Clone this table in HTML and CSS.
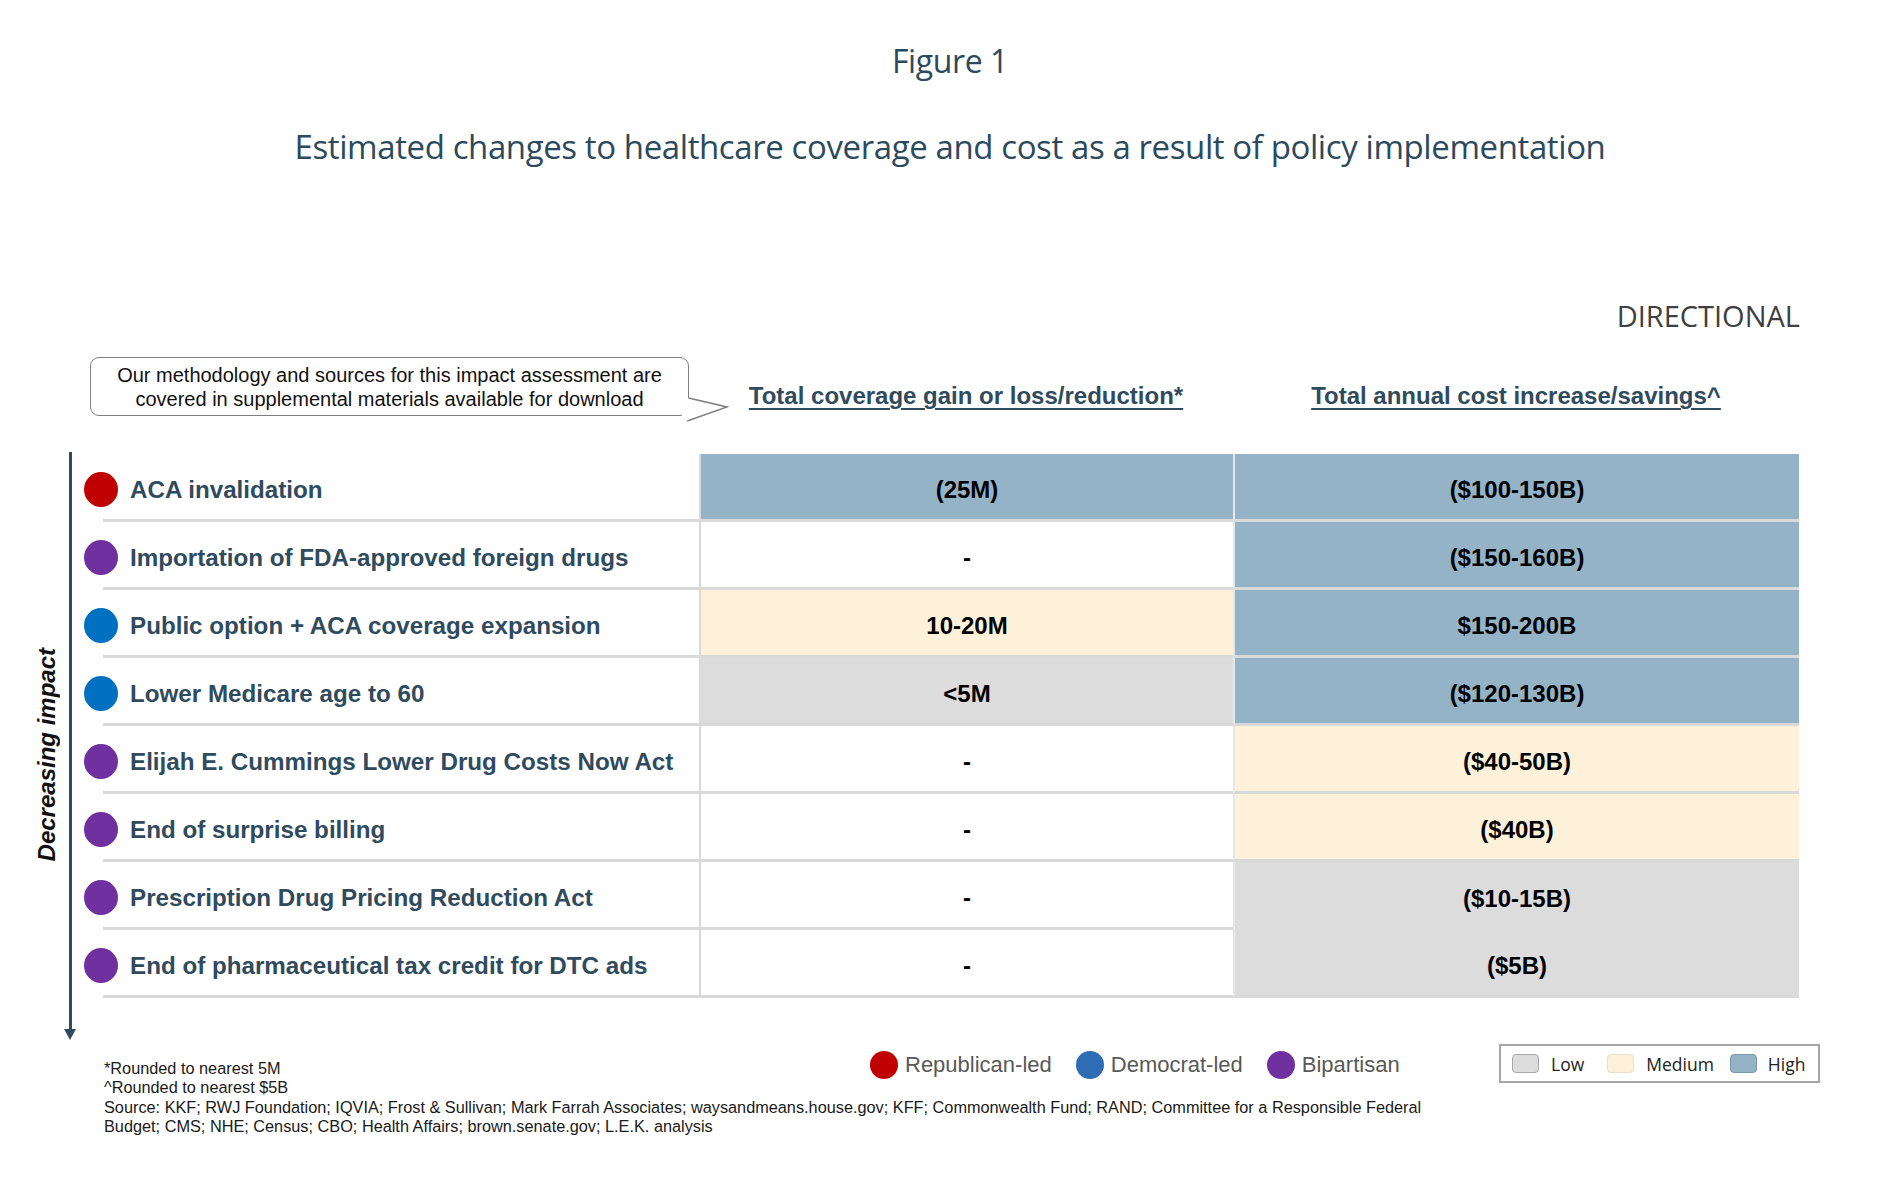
FILE: index.html
```html
<!DOCTYPE html>
<html lang="en">
<head>
<meta charset="utf-8">
<title>Figure 1</title>
<link rel="stylesheet" href="styles.css">
</head>
<body>
<div class="page">
  <h1 class="fig">Figure 1</h1>
  <h2 class="subtitle">Estimated changes to healthcare coverage and cost as a result of policy implementation</h2>
  <div class="directional">DIRECTIONAL</div>

  <div class="head-row">
    <div class="callout">
      <p>Our methodology and sources for this impact assessment are<br>covered in supplemental materials available for download</p>
      <svg class="callout-tail" width="50" height="40" viewBox="0 0 50 40">
        <polygon points="2,9 9,9 47,18 7.5,32 2,32" fill="#fff"/>
        <polyline points="8.6,9 47,18 7.2,32" fill="none" stroke="#7f7f7f" stroke-width="1.5"/>
      </svg>
    </div>
    <div class="col-head">Total coverage gain or loss/reduction*</div>
    <div class="col-head">Total annual cost increase/savings^</div>
  </div>

  <div class="matrix">
    <div class="axis-label">Decreasing impact</div>
    <div class="axis"><div class="axis-line"></div><div class="axis-head"></div></div>
    <div class="grid">
      <div class="cell lbl"><span class="dot red"></span>ACA invalidation</div>
      <div class="cell c2 hi">(25M)</div>
      <div class="cell c3 hi">($100-150B)</div>

      <div class="cell lbl"><span class="dot purple"></span>Importation of FDA-approved foreign drugs</div>
      <div class="cell c2">-</div>
      <div class="cell c3 hi">($150-160B)</div>

      <div class="cell lbl"><span class="dot blue"></span>Public option + ACA coverage expansion</div>
      <div class="cell c2 md">10-20M</div>
      <div class="cell c3 hi">$150-200B</div>

      <div class="cell lbl"><span class="dot blue"></span>Lower Medicare age to 60</div>
      <div class="cell c2 lo">&lt;5M</div>
      <div class="cell c3 hi">($120-130B)</div>

      <div class="cell lbl"><span class="dot purple"></span>Elijah E. Cummings Lower Drug Costs Now Act</div>
      <div class="cell c2">-</div>
      <div class="cell c3 md">($40-50B)</div>

      <div class="cell lbl"><span class="dot purple"></span>End of surprise billing</div>
      <div class="cell c2">-</div>
      <div class="cell c3 md">($40B)</div>

      <div class="cell lbl"><span class="dot purple"></span>Prescription Drug Pricing Reduction Act</div>
      <div class="cell c2">-</div>
      <div class="cell c3 lo nb">($10-15B)</div>

      <div class="cell lbl"><span class="dot purple"></span>End of pharmaceutical tax credit for DTC ads</div>
      <div class="cell c2">-</div>
      <div class="cell c3 lo">($5B)</div>
    </div>
  </div>

  <div class="bottom">
    <div class="notes">*Rounded to nearest 5M<br>^Rounded to nearest $5B</div>
    <div class="legend">
      <div class="lg-item"><span class="lg-dot red"></span>Republican-led</div>
      <div class="lg-item"><span class="lg-dot dem"></span>Democrat-led</div>
      <div class="lg-item"><span class="lg-dot purple"></span>Bipartisan</div>
    </div>
    <div class="scale">
      <span class="sw sw-lo"></span><span class="t">Low</span>
      <span class="sw sw-md"></span><span class="t t-md">Medium</span>
      <span class="sw sw-hi"></span><span class="t last">High</span>
    </div>
    <div class="source">Source: KKF; RWJ Foundation; IQVIA; Frost &amp; Sullivan; Mark Farrah Associates; waysandmeans.house.gov; KFF; Commonwealth Fund; RAND; Committee for a Responsible Federal<br>Budget; CMS; NHE; Census; CBO; Health Affairs; brown.senate.gov; L.E.K. analysis</div>
  </div>
</div>
</body>
</html>
```
FILE: styles.css
```css
body {
  margin: 0;
  background: #ffffff;
}

.page {
  width: 1900px;
}

.fig {
  margin: 41px 0 0;
  font: 400 32px/40px "Open Sans", sans-serif;
  letter-spacing: -0.4px;
  color: #2d4a5c;
  text-align: center;
}

.subtitle {
  margin: 46px 0 0;
  font: 400 33px/40px "Open Sans", sans-serif;
  letter-spacing: -0.4px;
  color: #2d4a5c;
  text-align: center;
}

.directional {
  margin-top: 131px;
  padding-right: 100px;
  text-align: right;
  font: 400 29px/36px "Open Sans", sans-serif;
  color: #404040;
}

.head-row {
  margin-top: 23px;
  display: grid;
  grid-template-columns: 699px 534px 566px;
  height: 59px;
}

.callout {
  position: relative;
  margin-left: 90px;
  width: 599px;
  height: 59px;
  box-sizing: border-box;
  border: 1.5px solid #7f7f7f;
  border-radius: 9px;
  display: flex;
  align-items: center;
  justify-content: center;
  font: 400 20px/24px "Liberation Sans", Arial, sans-serif;
  color: #111;
  text-align: center;
}

.callout p {
  margin: 0;
}

.callout-tail {
  position: absolute;
  left: 588.5px;
  top: 30.5px;
  overflow: visible;
}

.col-head {
  margin-top: 25px;
  text-align: center;
  font: 700 24px/28px "Liberation Sans", Arial, sans-serif;
  color: #2f4b5d;
  text-decoration: underline;
  text-decoration-thickness: 2px;
  text-underline-offset: 4px;
}

.matrix {
  margin-top: 36px;
  display: flex;
}

.axis-label {
  margin-left: 33px;
  margin-top: 18px;
  width: 28px;
  align-self: center;
  writing-mode: vertical-rl;
  transform: rotate(180deg);
  font: italic 700 24px/28px "Liberation Sans", Arial, sans-serif;
  color: #111;
  white-space: nowrap;
}

.axis {
  margin-left: 3px;
  width: 12px;
  display: flex;
  flex-direction: column;
  align-items: center;
}

.axis-line {
  flex: 1;
  width: 3px;
  background: #2f4b5d;
}

.axis-head {
  width: 0;
  height: 0;
  border-left: 6px solid transparent;
  border-right: 6px solid transparent;
  border-top: 11px solid #2f4b5d;
}

.grid {
  margin: 2px 0 42px 27px;
  display: grid;
  grid-template-columns: 596px 534px 566px;
  grid-auto-rows: 68px;
}

.cell {
  box-sizing: border-box;
  padding-top: 6px;
  border-bottom: 3px solid #d9d9d9;
  display: flex;
  align-items: center;
  justify-content: center;
  font: 700 24px "Liberation Sans", Arial, sans-serif;
  color: #000;
}

.lbl {
  justify-content: flex-start;
  font-size: 24.2px;
  color: #2f4b5d;
  white-space: nowrap;
}

.dot {
  flex: none;
  width: 34px;
  height: 35px;
  border-radius: 50%;
  margin-left: -19px;
  margin-right: 12px;
}

.red { background: #c00000; }
.purple { background: #7030a0; }
.blue { background: #0070c0; }
.dem { background: #2e6db5; }

.c2 {
  border-left: 2px solid #d9d9d9;
}

.c3 {
  border-left: 2px solid #e4e8eb;
}

.hi { background: #95b3c7; }
.md { background: #fdf2d9; }
.lo { background: #dcdcdc; }

.nb {
  border-bottom: none;
}

.bottom {
  margin-top: 4px;
  padding-left: 104px;
  display: grid;
  grid-template-columns: 766px 629px 321px;
}

.notes,
.source {
  font: 400 16.3px/19.4px "Liberation Sans", Arial, sans-serif;
  color: #1a1a1a;
  white-space: nowrap;
}

.notes {
  margin-top: 15px;
}

.source {
  grid-column: 1 / 3;
}

.legend {
  align-self: start;
  margin-top: 7px;
  display: flex;
  align-items: center;
  font: 400 22px/28px "Liberation Sans", Arial, sans-serif;
  color: #595959;
}

.lg-item {
  display: flex;
  align-items: center;
  gap: 7px;
  margin-right: 24px;
}

.lg-dot {
  width: 28px;
  height: 28px;
  border-radius: 50%;
}

.scale {
  align-self: start;
  box-sizing: border-box;
  height: 39px;
  border: 2px solid #a6a6a6;
  display: flex;
  align-items: center;
  padding-left: 11px;
  font: 400 17.5px "Open Sans", sans-serif;
  color: #222;
}

.sw {
  box-sizing: border-box;
  width: 27px;
  height: 19px;
  border-radius: 4px;
  border: 1px solid #a9a9a9;
  margin-right: 12px;
}

.sw-lo { background: #dcdcdc; }
.sw-md { background: #fdf2d9; border-color: #e8e0cc; }
.sw-hi { background: #95b3c7; border-color: #7f97a8; margin-right: 11px; }

.t {
  margin-right: 23px;
}

.t.t-md {
  margin-right: 16px;
}

.t.last {
  margin-right: 0;
}
```
